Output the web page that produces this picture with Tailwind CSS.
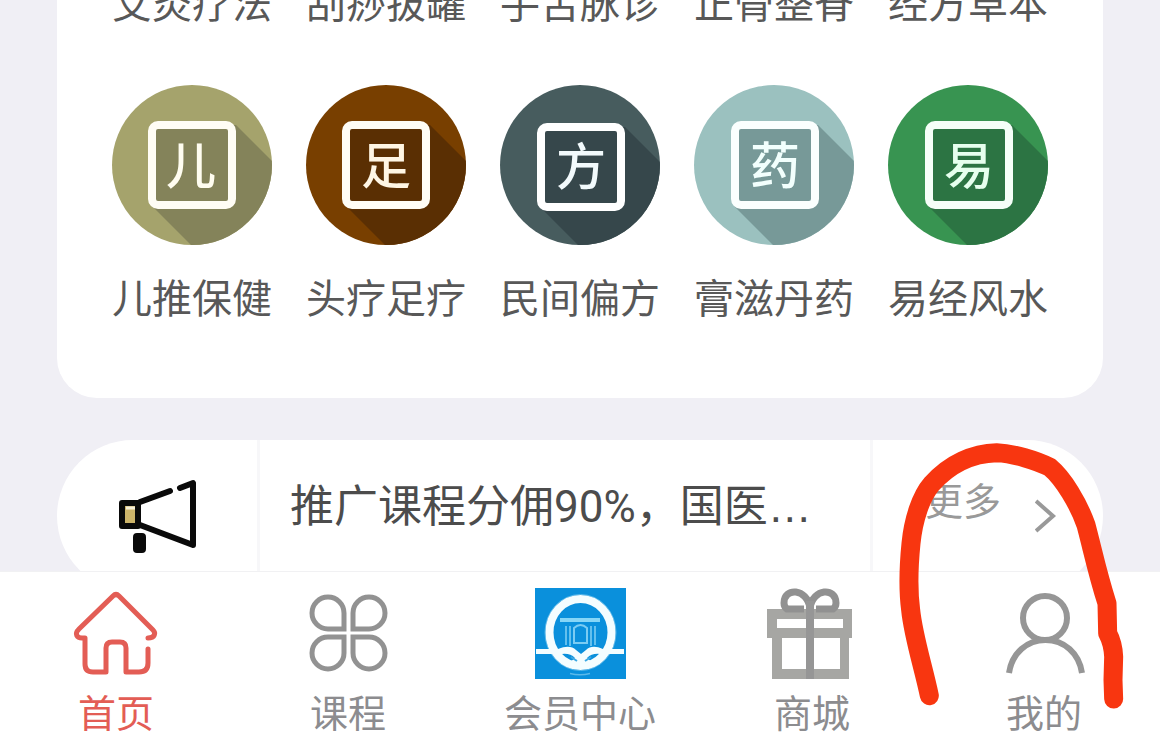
<!DOCTYPE html>
<html lang="zh-CN">
<head>
    <meta charset="UTF-8">
    <meta name="viewport" content="width=device-width, initial-scale=1.0">
    <title>首页</title>
    <script src="https://cdn.jsdelivr.net/npm/@tailwindcss/browser@4"></script>
</head>
<body class="relative h-screen flex flex-col overflow-hidden bg-[#f0eff5] font-['Noto_Sans_CJK_SC',sans-serif] text-[#585858]">

    <main class="flex-1 min-h-0 overflow-hidden">

        <!-- Category grid -->
        <section class="-mt-[27px] mx-[57px] px-[38px] pb-[74px] bg-white rounded-b-[40px]">
            <div class="grid grid-cols-5 text-center text-[40px] leading-[56px] whitespace-nowrap">
                <a href="#">艾灸疗法</a>
                <a href="#">刮痧拔罐</a>
                <a href="#">手舌脉诊</a>
                <a href="#">正骨整脊</a>
                <a href="#">经方草本</a>
            </div>

            <div class="mt-14 grid grid-cols-5 text-center text-[40px] leading-[56px] whitespace-nowrap">
                <a href="#" class="flex flex-col items-center gap-[23px]">
                    <svg class="size-40" viewBox="0 0 160 160">
                        <clipPath id="disc"><circle cx="80" cy="80" r="80"/></clipPath>
                        <circle cx="80" cy="80" r="80" fill="#a5a36c"/>
                        <path d="M40 40L124 40L200 116V200H119L40 121Z" fill="#84835a" clip-path="url(#disc)"/>
                        <rect x="40" y="40" width="80" height="80" rx="6" fill="none" stroke="#fffdf5" stroke-width="8"/>
                        <text x="79" y="99" text-anchor="middle" font-size="50" font-weight="500" fill="#fffdf0">儿</text>
                    </svg>
                    <span>儿推保健</span>
                </a>
                <a href="#" class="flex flex-col items-center gap-[23px]">
                    <svg class="size-40" viewBox="0 0 160 160">
                        <circle cx="80" cy="80" r="80" fill="#783f00"/>
                        <path d="M40 40L124 40L200 116V200H119L40 121Z" fill="#5a2f03" clip-path="url(#disc)"/>
                        <rect x="40" y="40" width="80" height="80" rx="6" fill="none" stroke="#fffdf5" stroke-width="8"/>
                        <text x="80" y="99" text-anchor="middle" font-size="50" font-weight="500" fill="#fff6e4">足</text>
                    </svg>
                    <span>头疗足疗</span>
                </a>
                <a href="#" class="flex flex-col items-center gap-[23px]">
                    <svg class="size-40" viewBox="0 0 160 160">
                        <circle cx="80" cy="80" r="80" fill="#475c5e"/>
                        <path d="M41 42L125 42L200 117V200H118L41 123Z" fill="#36474b" clip-path="url(#disc)"/>
                        <rect x="41" y="42" width="80" height="80" rx="6" fill="none" stroke="#ffffff" stroke-width="8"/>
                        <text x="81" y="100" text-anchor="middle" font-size="50" font-weight="500" fill="#f2fafc">方</text>
                    </svg>
                    <span>民间偏方</span>
                </a>
                <a href="#" class="flex flex-col items-center gap-[23px]">
                    <svg class="size-40" viewBox="0 0 160 160">
                        <circle cx="80" cy="80" r="80" fill="#9bc1bf"/>
                        <path d="M40 40L124 40L200 116V200H119L40 121Z" fill="#779998" clip-path="url(#disc)"/>
                        <rect x="41" y="40" width="80" height="80" rx="6" fill="none" stroke="#fafffe" stroke-width="8"/>
                        <text x="81" y="99" text-anchor="middle" font-size="50" font-weight="500" fill="#f2fffd">药</text>
                    </svg>
                    <span>膏滋丹药</span>
                </a>
                <a href="#" class="flex flex-col items-center gap-[23px]">
                    <svg class="size-40" viewBox="0 0 160 160">
                        <circle cx="80" cy="80" r="80" fill="#389451"/>
                        <path d="M40 40L124 40L200 116V200H119L40 121Z" fill="#2c7443" clip-path="url(#disc)"/>
                        <rect x="41" y="40" width="80" height="80" rx="6" fill="none" stroke="#f5fff8" stroke-width="8"/>
                        <text x="81" y="99" text-anchor="middle" font-size="50" font-weight="500" fill="#e6ffee">易</text>
                    </svg>
                    <span>易经风水</span>
                </a>
            </div>
        </section>

        <!-- Announcement bar -->
        <section class="mt-[42px] mx-[57px] h-[152px] flex bg-white rounded-full">
            <div class="w-[203px] border-r-3 border-[#f7f7f9] flex items-center justify-center">
                <svg class="size-20" viewBox="0 0 80 80" fill="none" stroke="#0a0a0a" stroke-width="6" stroke-linecap="round" stroke-linejoin="round">
                    <rect x="5" y="27" width="16" height="23" fill="#cdb56a"/>
                    <path d="M9 32H18" stroke="#f6efd8" stroke-width="3" stroke-linecap="butt"/>
                    <path d="M23 26L53 15M63 12L76 7V69L23 49"/>
                    <rect x="19" y="60" width="7" height="14" rx="1" fill="#0a0a0a"/>
                </svg>
            </div>
            <a href="#" class="flex-1 min-w-0 flex items-center pl-[30px] pb-[18px] text-[44px] leading-[60px] whitespace-nowrap text-[#4c4c4c] font-[Roboto,'Noto_Sans_CJK_SC',sans-serif]">推广课程分佣90%，国医<span class="font-['Liberation_Sans']">…</span></a>
            <a href="#" class="w-[233px] border-l-3 border-[#f7f7f9] flex items-center gap-[34px] pl-[52px] text-[38px] text-[#999999]">
                <span class="pb-9">更多</span>
                <svg class="w-[22px] h-9" viewBox="0 0 22 36" fill="none" stroke="currentColor" stroke-width="4">
                    <path d="M1 3L18 18L1 33"/>
                </svg>
            </a>
        </section>
    </main>

    <!-- Tab bar -->
    <nav class="shrink-0 h-[183px] pt-4 grid grid-cols-5 bg-white border-t border-[#f1f1f3] text-[38px] leading-[48px] text-[#8c8c8f] whitespace-nowrap">
        <a href="#" class="flex flex-col items-center gap-[7px] text-[#e35d55]">
            <svg class="size-[92px]" viewBox="0 0 92 92" fill="none" stroke="currentColor" stroke-width="5" stroke-linecap="round" stroke-linejoin="round">
                <path d="M78 50C85 50 86 45 83 42L49 8Q46 5 43 8L9 41C4 46 7 50 12 50H15V76Q15 84 23 84H36V60Q36 54 42 54H50Q56 54 56 60V84H69Q78 84 78 75V61"/>
            </svg>
            <span>首页</span>
        </a>
        <a href="#" class="flex flex-col items-center gap-[7px]">
            <svg class="size-[92px]" viewBox="0 0 92 92" fill="none" stroke="#929292" stroke-width="5">
                <path d="M42 41V25A16 16 0 1 0 26 41Z"/>
                <path d="M51 41V25A16 16 0 1 1 67 41Z"/>
                <path d="M42 49V65A16 16 0 1 1 26 49Z"/>
                <path d="M51 49V65A16 16 0 1 0 67 49Z"/>
            </svg>
            <span>课程</span>
        </a>
        <a href="#" class="flex flex-col items-center gap-[7px]">
            <svg class="size-[92px]" viewBox="0 0 92 92" fill="none">
                <rect x="1" width="91" height="91" fill="#0a90dc"/>
                <ellipse cx="46.500" cy="44.500" rx="35.500" ry="38" stroke="#5bb9ea" stroke-width="1"/>
                <ellipse cx="46.500" cy="44.500" rx="31" ry="33.500" stroke="#f4fdff" stroke-width="8"/>
                <path d="M26 32H66" stroke="#86d6f7" stroke-width="4"/>
                <path d="M32 38V57M36 38V58M57 38V58M61 38V57" stroke="#63c0ee" stroke-width="2"/>
                <path d="M40 55V40Q46.500 34 53 40V55Z" stroke="#7accf3" stroke-width="2"/>
                <path d="M2 61H24Q36 56 42 62L47 66L52 62Q58 56 69 61H90V66H66Q58 65 53 70L59 75Q47 82 35 75L41 70Q36 65 28 66H2Z" fill="#f4fdff"/>
                <path d="M37 69L43 73M57 69L51 73" stroke="#3ba8e3" stroke-width="2"/>
                <path d="M36 85.500Q46 88 56 85.500" stroke="#5bb9ea" stroke-width="1.500"/>
            </svg>
            <span>会员中心</span>
        </a>
        <a href="#" class="flex flex-col items-center gap-[7px]">
            <svg class="size-[92px]" viewBox="0 0 92 92">
                <path fill="#a6a6a3" fill-rule="evenodd" d="M1 21H86V50H83V91H6V50H1ZM11 31V40H77V31ZM16 50V81H74V50Z"/>
                <path d="M44 20C41 0 18 -1 18 15Q18 19 21 21H38M44 20C47 0 70 -1 70 15Q70 19 67 21H50" fill="none" stroke="#919191" stroke-width="7"/>
                <path d="M40 13H48V91H40Z" fill="#969696"/>
            </svg>
            <span>商城</span>
        </a>
        <a href="#" class="flex flex-col items-center gap-[7px]">
            <svg class="size-[92px]" viewBox="0 0 92 92" fill="none" stroke="#969696" stroke-width="6">
                <circle cx="47" cy="30" r="22"/>
                <path d="M11 85C14 65 29 52 47.500 52S81 65 84 85"/>
            </svg>
            <span>我的</span>
        </a>
    </nav>

    <!-- Hand-drawn marker around the profile tab -->
    <svg class="absolute right-0 bottom-0 w-[300px] h-[334px] pointer-events-none" viewBox="0 0 900 1002" fill="none" stroke="#f83610" stroke-width="57" stroke-linecap="round" stroke-linejoin="round">
        <path d="M208 827C190 740 160 650 152 570C144 510 147 430 153 370C160 300 182 230 215 192C270 130 340 100 410 98C460 100 530 122 570 142C610 175 655 250 678 315C698 390 712 460 741 550L743 640Q759 670 761 710L759 780L761 837"/>
    </svg>
</body>
</html>
